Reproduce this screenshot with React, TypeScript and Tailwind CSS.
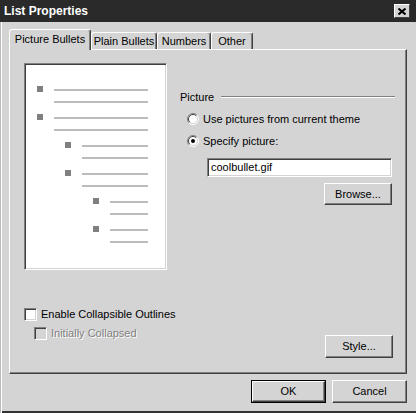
import React from "react";

function Radio({ checked }: { checked?: boolean }) {
  return (
    <svg width="12" height="12" viewBox="0 0 12 12" className="shrink-0">
      <circle cx="6" cy="6" r="5" fill="#fff" />
      <path d="M9.9 2.1 A5.5 5.5 0 0 0 2.1 9.9" stroke="#808080" fill="none" />
      <path d="M2.1 9.9 A5.5 5.5 0 0 0 9.9 2.1" stroke="#fff" fill="none" />
      <path d="M9.2 2.8 A4.5 4.5 0 0 0 2.8 9.2" stroke="#404040" fill="none" />
      <path d="M2.8 9.2 A4.5 4.5 0 0 0 9.2 2.8" stroke="#d4d4d4" fill="none" />
      {checked && <circle cx="6" cy="6" r="2" fill="#000" />}
    </svg>
  );
}

function Check({ disabled }: { disabled?: boolean }) {
  return (
    <div
      className={
        disabled
          ? "w-[13px] h-[13px] shrink-0 bg-[#d4d4d4] border border-t-[#808080] border-l-[#808080] border-b-white border-r-white shadow-[inset_1px_1px_0_#404040,inset_-1px_-1px_0_#d4d4d4]"
          : "w-[13px] h-[13px] shrink-0 bg-white border border-t-[#808080] border-l-[#808080] border-b-white border-r-white shadow-[inset_1px_1px_0_#404040,inset_-1px_-1px_0_#d4d4d4]"
      }
    />
  );
}

const btn =
  "flex items-center justify-center bg-[#d4d4d4] border border-t-white border-l-white border-r-[#404040] border-b-[#404040] shadow-[inset_-1px_-1px_0_#808080]";

const items = [
  { indent: "ml-0" },
  { indent: "ml-0" },
  { indent: "ml-[28px]" },
  { indent: "ml-[28px]" },
  { indent: "ml-[56px]" },
  { indent: "ml-[56px]" },
];

export default function App() {
  return (
    <div className="w-[416px] h-[413px] bg-[#d4d4d4] flex flex-col font-['Liberation_Sans',Arial,sans-serif] text-[11px] text-black shadow-[inset_1px_0_0_#bbbbbb,inset_2px_0_0_#ffffff,inset_0_-2px_0_#333333] overflow-hidden">
      {/* Title bar */}
      <div className="h-[22px] shrink-0 bg-[#2a2a2a] flex items-center justify-between pl-[4px] pr-[6px]">
        <span className="text-white font-bold text-[12px] leading-none">List Properties</span>
        <div className="w-[16px] h-[14px] bg-[#d4d4d4] border border-t-white border-l-white border-r-[#404040] border-b-[#404040] flex items-center justify-center">
          <svg width="8" height="7" viewBox="0 0 8 7">
            <path d="M0.5 0.5 L7.5 6.5 M7.5 0.5 L0.5 6.5" stroke="#000" strokeWidth="2" />
          </svg>
        </div>
      </div>

      {/* Body */}
      <div className="flex-1 flex flex-col px-[9px] pt-[7px]">
        {/* Tabs */}
        <div className="flex items-end h-[20px]">
          <div className="relative z-10 -mb-[1px] w-[82px] h-[21px] bg-[#d4d4d4] border-t border-l border-white border-r border-r-[#404040] shadow-[inset_-1px_0_0_#808080] rounded-t-[3px] flex justify-center pt-[3px] leading-[13px]">
            Picture Bullets
          </div>
          <div className="w-[66px] h-[17px] bg-[#d4d4d4] border-t border-l border-white border-r border-r-[#404040] shadow-[inset_-1px_0_0_#808080] rounded-t-[3px] flex justify-center pt-[2px] leading-[13px]">
            Plain Bullets
          </div>
          <div className="w-[54px] h-[17px] bg-[#d4d4d4] border-t border-l border-white border-r border-r-[#404040] shadow-[inset_-1px_0_0_#808080] rounded-t-[3px] flex justify-center pt-[2px] leading-[13px]">
            Numbers
          </div>
          <div className="w-[42px] h-[17px] bg-[#d4d4d4] border-t border-l border-white border-r border-r-[#404040] shadow-[inset_-1px_0_0_#808080] rounded-t-[3px] flex justify-center pt-[2px] leading-[13px]">
            Other
          </div>
        </div>

        {/* Panel */}
        <div className="w-[398px] h-[325px] shrink-0 flex flex-col border border-t-white border-l-white border-r-[#404040] border-b-[#404040] shadow-[inset_-1px_-1px_0_#808080]">
          <div className="flex pl-[14px] pt-[13px]">
            {/* Preview */}
            <div className="w-[143px] h-[207px] bg-white border border-t-[#808080] border-l-[#808080] border-b-white border-r-white shadow-[inset_1px_1px_0_#404040,inset_-1px_-1px_0_#d4d4d4] pl-[12px] pr-[18px] pt-[22px]">
              {items.map((it, i) => (
                <div key={i} className={"flex h-[28px] " + it.indent}>
                  <div className="w-[6px] h-[6px] bg-[#808080] shrink-0" />
                  <div className="flex-1 ml-[11px] flex flex-col">
                    <div className="mt-[3px] h-[2px] bg-[#bcbcbc]" />
                    <div className="mt-[10px] h-[2px] bg-[#bcbcbc]" />
                  </div>
                </div>
              ))}
            </div>

            {/* Right column */}
            <div className="ml-[13px] mt-[23px] w-[215px] flex flex-col">
              <div className="h-[22px] flex items-center">
                <span>Picture</span>
                <div className="flex-1 ml-[7px] border-t border-t-[#808080] border-b border-b-white" />
              </div>
              <div className="h-[22px] flex items-center pl-[7px] gap-[4px]">
                <Radio />
                <span>Use pictures from current theme</span>
              </div>
              <div className="h-[22px] flex items-center pl-[7px] gap-[4px]">
                <Radio checked />
                <span>Specify picture:</span>
              </div>
              <div className="mt-[6px] ml-[27px] w-[185px] h-[19px] bg-white border border-t-[#808080] border-l-[#808080] border-b-white border-r-white shadow-[inset_1px_1px_0_#404040,inset_-1px_-1px_0_#d4d4d4] flex items-center pl-[3px]">
                coolbullet.gif
              </div>
              <div className="mt-[6px] ml-[144px] w-[68px]">
                <div className={btn + " h-[22px] w-[68px]"}>Browse...</div>
              </div>
            </div>
          </div>

          {/* Bottom area */}
          <div className="flex justify-between pl-[14px] pr-[13px] mt-[38px]">
            <div className="flex flex-col">
              <div className="h-[13px] flex items-center gap-[4px]">
                <Check />
                <span>Enable Collapsible Outlines</span>
              </div>
              <div className="mt-[6px] pl-[10px] h-[13px] flex items-center gap-[4px]">
                <Check disabled />
                <span className="text-[#808080] [text-shadow:1px_1px_0_#fff]">Initially Collapsed</span>
              </div>
            </div>
            <div className={btn + " mt-[27px] w-[68px] h-[23px]"}>Style...</div>
          </div>
        </div>

        {/* Buttons */}
        <div className="mt-[6px] flex justify-end gap-[6px]">
          <div className="w-[75px] h-[23px] border border-black">
            <div className={btn + " w-full h-full"}>OK</div>
          </div>
          <div className={btn + " w-[75px] h-[23px]"}>Cancel</div>
        </div>
      </div>
    </div>
  );
}
